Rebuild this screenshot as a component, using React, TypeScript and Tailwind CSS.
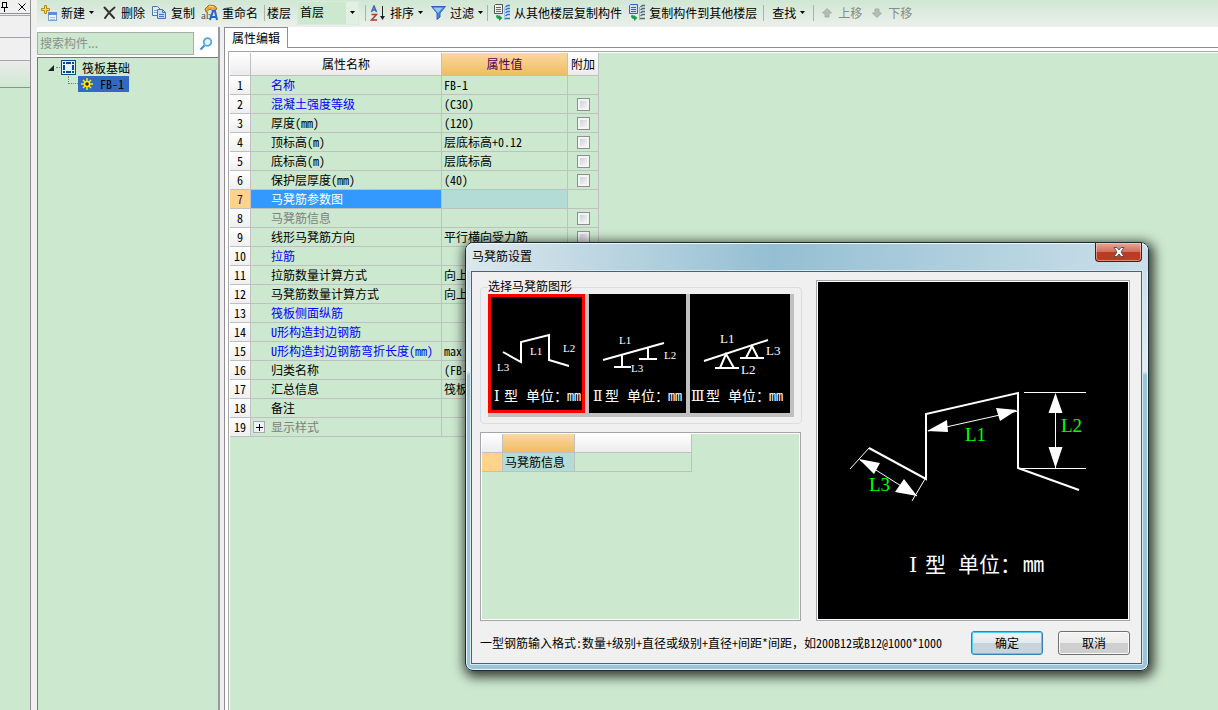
import { useState } from "react";
import type { ReactNode } from "react";

type Row = {
  name: string;
  value?: string;
  kind?: "link" | "muted";
  check?: boolean;
  expand?: boolean;
};

const rows: Row[] = [
  { name: "名称", value: "FB-1", kind: "link" },
  { name: "混凝土强度等级", value: "(C30)", kind: "link", check: true },
  { name: "厚度(mm)", value: "(120)", check: true },
  { name: "顶标高(m)", value: "层底标高+0.12", check: true },
  { name: "底标高(m)", value: "层底标高", check: true },
  { name: "保护层厚度(mm)", value: "(40)", check: true },
  { name: "马凳筋参数图" },
  { name: "马凳筋信息", kind: "muted", check: true },
  { name: "线形马凳筋方向", value: "平行横向受力筋", check: true },
  { name: "拉筋", kind: "link", check: true },
  { name: "拉筋数量计算方式", value: "向上", check: true },
  { name: "马凳筋数量计算方式", value: "向上", check: true },
  { name: "筏板侧面纵筋", kind: "link", check: true },
  { name: "U形构造封边钢筋", kind: "link", check: true },
  { name: "U形构造封边钢筋弯折长度(mm)", value: "max", kind: "link", check: true },
  { name: "归类名称", value: "(FB-1)", check: true },
  { name: "汇总信息", value: "筏板基础", check: true },
  { name: "备注", check: true },
  { name: "显示样式", kind: "muted", expand: true },
];

const SELECTED_ROW = 6;

export default function App() {
  const [shape, setShape] = useState(0);

  return (
    <div className="relative flex min-h-screen overflow-hidden bg-[#f0f0f0] text-xs text-black font-['Noto_Sans_Mono_CJK_SC','Noto_Sans_CJK_SC',sans-serif]">
      <DockStrip />
      <div className="ml-1.5 flex min-w-0 flex-1 flex-col">
        <Toolbar />
        <div className="flex flex-1">
          <ComponentTree />
          <PropertyEditor />
        </div>
      </div>
      <ShapeDialog shape={shape} onShape={setShape} />
    </div>
  );
}

/* ---------- left dock ---------- */
function DockStrip() {
  return (
    <aside className="flex w-[31px] shrink-0 flex-col border-r border-[#8f8f94] bg-[#f0f0f0]">
      <div className="flex h-3.5 items-center justify-between border-b border-[#8f8f94] pr-1">
        <button aria-label="固定">
          <svg width="9" height="11" viewBox="0 0 9 11" stroke="#000" fill="none">
            <path d="M2.5 1v5M6.5 1v5M2 1.5h5M1 6.5h7M4.5 7v4" />
          </svg>
        </button>
        <button aria-label="关闭">
          <svg width="8" height="8" viewBox="0 0 8 8" stroke="#000">
            <path d="M0.5 0.5l7 7M7.5 0.5l-7 7" />
          </svg>
        </button>
      </div>
      <div className="mt-px h-[23px] border-y border-[#a6a6aa]" />
      <div className="h-[23px] border-b border-[#a6a6aa]" />
      <div className="h-[26px] bg-linear-to-b from-[#ebebeb] to-[#cfe8d2]" />
      <div className="flex-1 border-t border-[#8f8f94] bg-[#cce8cf]" />
    </aside>
  );
}

/* ---------- toolbar ---------- */
const uiFont = "font-['Noto_Sans_CJK_SC',sans-serif]";

function Toolbar() {
  return (
    <header className={`flex h-[27px] items-center overflow-hidden bg-linear-to-b from-[#d0e7d3] to-[#ecefec] pb-0.5 pl-1 whitespace-nowrap ${uiFont}`}>
      <ToolButton icon={<NewIcon />} label="新建" menu />
      <div className="w-2" />
      <ToolButton icon={<DeleteIcon />} label="删除" />
      <div className="w-1.5" />
      <ToolButton icon={<CopyIcon />} label="复制" />
      <div className="w-1.5" />
      <ToolButton icon={<RenameIcon />} label="重命名" />
      <Separator className="ml-1.5 mr-0.5" />
      <label htmlFor="floor">楼层</label>
      <div className="relative ml-1.5 h-6 w-[62px] border border-[#d8ecda] bg-[#cce8cf]">
        <select id="floor" className="h-full w-full appearance-none pb-0.5 pl-0.5 outline-none">
          <option>首层</option>
        </select>
        <span className="pointer-events-none absolute inset-y-0 right-0 flex w-3 items-center justify-center bg-[#e2efe3]">
          <Caret />
        </span>
      </div>
      <Separator className="mr-1 ml-1.5" />
      <ToolButton icon={<SortIcon />} label="排序" menu />
      <div className="w-2" />
      <ToolButton icon={<FilterIcon />} label="过滤" menu />
      <Separator className="mr-1.5 ml-1" />
      <ToolButton icon={<FloorCopyIcon />} label="从其他楼层复制构件" />
      <div className="w-[7px]" />
      <ToolButton icon={<FloorCopyIcon blue />} label="复制构件到其他楼层" />
      <Separator className="mr-2 ml-1.5" />
      <ToolButton label="查找" menu />
      <Separator className="mr-1.5 ml-2" />
      <ToolButton icon={<MoveIcon />} label="上移" disabled />
      <div className="w-2" />
      <ToolButton icon={<MoveIcon down />} label="下移" disabled />
    </header>
  );
}

function ToolButton({ icon, label, menu, disabled }: { icon?: ReactNode; label: string; menu?: boolean; disabled?: boolean }) {
  return (
    <button disabled={disabled} className="flex shrink-0 items-center gap-1 disabled:text-[#858b86]">
      {icon}
      <span>{label}</span>
      {menu && <Caret />}
    </button>
  );
}

function Caret() {
  return (
    <svg width="5" height="3" viewBox="0 0 5 3">
      <path d="M0 0h5L2.5 3z" fill="#000" />
    </svg>
  );
}

function Separator({ className }: { className: string }) {
  return <span className={`h-4 w-px shrink-0 bg-[#a9b3aa] ${className}`} />;
}

function NewIcon() {
  return (
    <svg width="16" height="16" viewBox="0 0 16 16">
      <path d="M3.5 0.5h2v3h3v2h-3v3h-2v-3h-3v-2h3z" fill="#ffe04a" stroke="#b98a14" />
      <rect x="7.5" y="7.5" width="8" height="8" fill="#eef5ff" stroke="#7ba0d4" />
      <path d="M7 7h9v3H7z" fill="#5d8fd6" />
      <path d="M9 12.5h5M9 14.5h5" stroke="#9fbde6" />
    </svg>
  );
}

function DeleteIcon() {
  return (
    <svg width="15" height="16" viewBox="0 0 15 16" fill="none" stroke="#333" strokeLinecap="round">
      <path d="M2.5 2.5l9.500 10.500" strokeWidth="2" />
      <path d="M12.500 2.500C9 5 5.500 9 3 13" strokeWidth="2" />
    </svg>
  );
}

function CopyIcon() {
  return (
    <svg width="16" height="16" viewBox="0 0 16 16" stroke="#4c74bd">
      <path d="M1.500 1.500h5l3 3v6h-8z" fill="#e3eeff" />
      <path d="M3 5.500h4M3 7.500h4" stroke="#86a9de" />
      <path d="M6.500 4.500h5l3 3v6h-8z" fill="#c3d9fa" />
      <path d="M11.500 4.500v3h3M8 9.500h5M8 11.500h5" fill="none" />
    </svg>
  );
}

function RenameIcon() {
  return (
    <svg width="17" height="17" viewBox="0 0 17 17">
      <path d="M4 5l4-4 6 1 2 3-4 2-3-2-4 3z" fill="#e8a83a" stroke="#a86b19" />
      <path d="M8 2l5 1" stroke="#ffe9a0" />
      <text x="0" y="15" fontSize="11" fill="#555" fontFamily="Liberation Serif, serif">ab</text>
      <path d="M9 16l3-9h2l2 9M10 13h5" stroke="#2866c8" strokeWidth="2" fill="none" />
    </svg>
  );
}

function SortIcon() {
  return (
    <svg width="16" height="16" viewBox="0 0 16 16" fill="none">
      <path d="M1.500 7l2.500-6 2.500 6M2.500 5h3" stroke="#3d63b5" strokeWidth="1.500" />
      <path d="M1.500 9.500h5l-5 5.500h5.500" stroke="#b33a3a" strokeWidth="1.500" />
      <path d="M12.500 1v12" stroke="#222" />
      <path d="M10 11l2.500 4 2.500-4z" fill="#222" />
    </svg>
  );
}

function FilterIcon() {
  return (
    <svg width="15" height="15" viewBox="0 0 15 15">
      <path d="M0.500 1.500h14L9 8v4l-3 2.500V8z" fill="#4485e2" stroke="#2d62bb" />
      <path d="M2.500 2.800h9L7 8" fill="#9cc6fa" />
    </svg>
  );
}

function FloorCopyIcon({ blue }: { blue?: boolean }) {
  return (
    <svg width="16" height="17" viewBox="0 0 16 17" fill="none">
      <path d="M0.500 1.500l1-1h7v9h-8z" fill={blue ? "#cfe0ff" : "#f1f1f1"} stroke={blue ? "#2f5fc0" : "#555"} />
      <path d="M2 3.500h5M2 5.500h5M2 7.500h5" stroke={blue ? "#2f5fc0" : "#666"} />
      <path d="M2 11.500c2-1.500 3 0 3 1.500v-2l3.500 3-3.500 3v-2c-2 0-3-1.500-3-3.500z" fill="#18a048" />
      <path d="M10.500 3v13" stroke={blue ? "#9ab0cc" : "#9cc5f2"} />
      <path d="M16 1.500h-2.500l-2 1.500M16 4.500h-2.500l-2 1.500M16 7.500h-2.500l-2 1.500M16 10.500h-2.500l-2 1.500M16 14.500h-5" stroke={blue ? "#52657f" : "#2f74cc"} strokeWidth="1.500" />
    </svg>
  );
}

function MoveIcon({ down }: { down?: boolean }) {
  return (
    <svg width="14" height="10" viewBox="0 0 14 10" className={down ? "rotate-180" : ""}>
      <path d="M7 0.500l4.500 4.500h-2.500v4h-4v-4h-2.500z" fill="#b4bcb5" stroke="#a4aea5" />
    </svg>
  );
}

/* ---------- component tree ---------- */
function ComponentTree() {
  return (
    <section className="mr-1 flex w-[183px] shrink-0 flex-col border-r-2 border-[#9a9a9e] bg-white">
      <div className="mt-[3px] flex h-[27px] items-center">
        <input
          aria-label="搜索构件"
          placeholder="搜索构件..."
          className={`h-[23px] min-w-0 flex-1 border border-[#a6b0a8] bg-[#cce8cf] px-0.5 pb-0.5 outline-none placeholder:text-[#8a918b] ${uiFont}`}
        />
        <button aria-label="搜索" className="flex w-6 justify-center">
          <svg width="14" height="14" viewBox="0 0 14 14" fill="none">
            <circle cx="8.500" cy="5" r="3.800" stroke="#55a4e4" strokeWidth="1.800" fill="#e8f5ff" />
            <path d="M5.500 8.500L1.500 12.500" stroke="#3f8fd6" strokeWidth="2.200" />
          </svg>
        </button>
      </div>
      <div className="flex-1 border-t border-l border-[#77777c] bg-[#cce8cf] pt-px">
        <ul>
          <li>
            <div className="flex h-[17px] items-center pl-2.5">
              <svg width="6" height="6" viewBox="0 0 6 6">
                <path d="M6 0v6H0z" fill="#222" />
              </svg>
              <span className="ml-0.5 mr-px w-1 border-t border-dotted border-[#808080]" />
              <svg width="15" height="15" viewBox="0 0 15 15" fill="none">
                <rect width="15" height="15" fill="#0b4a8f" />
                <path d="M1 1.500h13M1 13.500h13M1.500 1v13M13.500 1v13M1 4.500h13M1 10.500h13M4.500 1v13M10.500 1v13" stroke="#dff0ff" />
                <rect x="5" y="5" width="5" height="5" fill="#e8f6ff" />
              </svg>
              <span className="ml-1.5">筏板基础</span>
            </div>
            <ul className="pl-[30px]">
              <li className="flex">
                <span className="mb-2 w-2.5 border-b border-l border-dotted border-[#808080]" />
                <div className="flex h-4 items-center bg-[#316ac5] pr-[5px] pl-[3px]">
                  <svg width="12" height="12" viewBox="0 0 12 12" fill="none">
                    <path d="M6 0v12M0 6h12M2 2l8 8M10 2l-8 8" stroke="#ffea00" strokeWidth="1.500" />
                    <circle cx="6" cy="6" r="2.500" fill="#222" stroke="#ffea00" strokeWidth="1.500" />
                  </svg>
                  <span className="ml-[7px]">FB-1</span>
                </div>
              </li>
            </ul>
          </li>
        </ul>
      </div>
    </section>
  );
}

/* ---------- property grid ---------- */
const headCell = "h-[23px] border-r border-b border-[#c0c0c0] bg-linear-to-b from-white to-[#ececec] p-0 text-center font-normal";
const cell = "h-[19px] border-r border-b border-[#c0c0c0] p-0";

function PropertyEditor() {
  return (
    <section className="flex min-w-0 flex-1 flex-col border-l border-[#8f8c96] bg-white">
      <div className="flex h-[21px]" role="tablist">
        <button role="tab" aria-selected className="w-[63px] border-t border-r border-[#8f8c96] bg-white">
          属性编辑
        </button>
        <div className="flex-1 border-b border-[#8f8c96]" />
      </div>
      <div className="mt-[3px] ml-[3px] flex-1 border-t border-l border-[#a6a6aa] bg-white pt-px pl-px">
        <div className="h-full bg-[#cce8cf]">
          <table className="w-[369px] table-fixed border-separate border-spacing-0 leading-4">
            <colgroup>
              <col className="w-[21px]" />
              <col className="w-[191px]" />
              <col className="w-[126px]" />
              <col className="w-[31px]" />
            </colgroup>
            <thead>
              <tr>
                <th className={headCell} />
                <th className={headCell}>属性名称</th>
                <th className="h-[23px] border-r border-b border-[#c0c0c0] bg-linear-to-b from-[#fbd7a0] to-[#efbd60] p-0 text-center font-normal text-[#500050]">属性值</th>
                <th className={headCell}>附加</th>
              </tr>
            </thead>
            <tbody>
              {rows.map((row, i) => (
                <PropertyRow key={row.name} row={row} index={i} selected={i === SELECTED_ROW} />
              ))}
            </tbody>
          </table>
        </div>
      </div>
    </section>
  );
}

function PropertyRow({ row, index, selected }: { row: Row; index: number; selected: boolean }) {
  const color = selected ? "text-white" : row.kind === "link" ? "text-[#0000ff]" : row.kind === "muted" ? "text-[#808080]" : "text-black";

  return (
    <tr>
      <td className={`${cell} text-center ${selected ? "bg-[#ffd48a] text-[#500050]" : "bg-linear-to-b from-white to-[#efefef]"}`}>{index + 1}</td>
      <td className={`${cell} ${selected ? "bg-[#3399ff]" : ""} ${color}`}>
        <div className="flex items-center">
          <span className="flex w-5 shrink-0 pl-0.5">
            {row.expand && (
              <button aria-label="展开" className="flex size-3 items-center justify-center border border-[#a8a8b0] bg-[#eef0f4]">
                <svg width="7" height="7" viewBox="0 0 7 7" stroke="#000">
                  <path d="M0 3.500h7M3.500 0v7" />
                </svg>
              </button>
            )}
          </span>
          <span className="whitespace-nowrap">{row.name}</span>
        </div>
      </td>
      <td className={`${cell} overflow-hidden pl-0.5 whitespace-nowrap ${selected ? "bg-[#b4dcd7]" : ""}`}>{row.value}</td>
      <td className={cell}>
        {row.check && (
          <input
            type="checkbox"
            aria-label={row.name}
            className="mx-auto block size-[13px] appearance-none border border-[#8e8f8f] bg-linear-to-br from-[#c3c8ce] to-white shadow-[inset_0_0_0_2px_#f4f4f4]"
          />
        )}
      </td>
    </tr>
  );
}

/* ---------- shape dialog ---------- */
function ShapeDialog({ shape, onShape }: { shape: number; onShape: (i: number) => void }) {
  return (
    <div
      role="dialog"
      aria-label="马凳筋设置"
      className="absolute top-[242px] left-[465px] flex w-[684px] flex-col rounded-lg border border-[#1d2a30] bg-linear-to-b from-[#c4dbe6] from-0% via-[#e3edf2] via-30% to-[#9cc4d8] to-31% pr-1.5 pb-1.5 pl-[5px] shadow-[2px_3px_12px_3px_rgba(0,0,0,0.75),inset_0_0_0_1px_#e8f4f9]"
    >
      <div className="-mr-1.5 -ml-[5px] flex h-7 items-start justify-between rounded-t-lg bg-linear-to-r from-[#dce8ee] via-[#94bfd2] via-45% to-[#cadfe9] pr-1.5 pl-1.5 shadow-[inset_0_1px_0_#eef7fb]">
        <h1 className={`leading-[26px] ${uiFont}`}>马凳筋设置</h1>
        <button
          aria-label="关闭"
          className="flex h-[19px] w-[47px] items-center justify-center rounded-b border border-t-0 border-[#4c1a16] bg-linear-to-b from-[#e6a89c] from-0% via-[#d0705f] via-48% to-[#bd3a24] to-52% shadow-[inset_0_0_0_1px_rgba(255,220,210,0.5)]"
        >
          <svg width="12" height="10" viewBox="0 0 12 10">
            <path d="M1 0.500h3l2 2.500 2-2.500h3L8 5l3 4.500H8L6 7 4 9.500H1L4 5z" fill="#fff" stroke="#53565c" />
          </svg>
        </button>
      </div>

      <div className="border border-[#4d626d] bg-[#f0f0f0] pt-2 pr-[11px] pb-2 pl-2 shadow-[0_0_0_1px_#d6e8f0]">
        <div className="flex gap-[15px]">
          <div className="flex w-[321px] shrink-0 flex-col">
            <fieldset className="h-[144px] rounded border border-[#d5dfe5] px-[7px]">
              <legend className="h-[14px] leading-3">选择马凳筋图形</legend>
              <div className="grid w-[306px] grid-cols-[97px_97px_100px] gap-1 bg-[#c0c0c0] pr-1 pb-1">
                {thumbs.map((Thumb, i) => (
                  <button
                    key={i}
                    aria-pressed={shape === i}
                    onClick={() => onShape(i)}
                    className={`h-[119px] overflow-hidden bg-black ${shape === i ? "ring-3 ring-[#ff0000] ring-inset" : ""}`}
                  >
                    <Thumb />
                  </button>
                ))}
              </div>
            </fieldset>
            <div className="mt-2 flex-1 border border-[#a6a6aa] bg-white p-px">
              <div className="h-full bg-[#cce8cf]">
                <table className="w-[210px] table-fixed border-separate border-spacing-0 leading-4">
                  <colgroup>
                    <col className="w-[21px]" />
                    <col className="w-[72px]" />
                    <col className="w-[117px]" />
                  </colgroup>
                  <tbody>
                    <tr>
                      <td className="h-[19px] border-r border-b border-[#c0c0c0] bg-linear-to-b from-white to-[#ececec] p-0" />
                      <td className="border-r border-b border-[#c0c0c0] bg-linear-to-b from-[#fbd7a0] to-[#efbd60] p-0" />
                      <td className="border-r border-b border-[#c0c0c0] bg-linear-to-b from-white to-[#ececec] p-0" />
                    </tr>
                    <tr>
                      <td className={`${cell} bg-[#ffd48a]`} />
                      <td className={`${cell} bg-[#b4dcd7] pl-0.5 whitespace-nowrap`}>马凳筋信息</td>
                      <td className={cell} />
                    </tr>
                  </tbody>
                </table>
              </div>
            </div>
          </div>
          <div className="flex-1 border border-[#a6a6aa] bg-white p-px">
            <Preview />
          </div>
        </div>

        <div className="mt-[10px] flex items-center">
          <p className="flex-1 whitespace-nowrap">一型钢筋输入格式:数量+级别+直径或级别+直径+间距*间距，如200B12或B12@1000*1000</p>
          <button className="h-6 w-[72px] rounded-[3px] border border-[#3c7fb1] bg-linear-to-b from-[#eef3f6] via-[#e3eaee] via-48% to-[#c8d4da] to-52% shadow-[inset_0_0_0_1px_#46d0f5]">确定</button>
          <button className="ml-[15px] h-6 w-[72px] rounded-[3px] border border-[#707070] bg-linear-to-b from-[#f2f2f2] via-[#ebebeb] via-48% to-[#cfcfcf] to-52% shadow-[inset_0_0_0_1px_#fbfbfb]">取消</button>
        </div>
      </div>
    </div>
  );
}

const serif = "'Liberation Serif', serif";
const roman = "'DejaVu Serif', serif";

function Caption({ numeral, x }: { numeral: string; x: number }) {
  return (
    <g fill="#fff" stroke="none" fontSize="14">
      <text x={x} y="107" fontFamily={roman}>{numeral}</text>
      <text x="16" y="107">型</text>
      <text x="38" y="107">单位：</text>
      <text x="79" y="107">mm</text>
    </g>
  );
}

function ThumbOne() {
  return (
    <svg width="97" height="119" viewBox="0 0 97 119" fill="none" stroke="#fff" strokeWidth="2">
      <path d="M15 58l18 10V48l28-7v25l20 6" />
      <g fill="#fff" stroke="none" fontSize="11" fontFamily={serif}>
        <text x="42" y="61">L1</text>
        <text x="75" y="58">L2</text>
        <text x="9" y="77">L3</text>
      </g>
      <Caption numeral="Ⅰ" x={6} />
    </svg>
  );
}

function ThumbTwo() {
  return (
    <svg width="97" height="119" viewBox="0 0 97 119" fill="none" stroke="#fff" strokeWidth="2">
      <path d="M14 66l61-17M33 61v12M25 73h17M59 54v11M50 65h18" />
      <g fill="#fff" stroke="none" fontSize="11" fontFamily={serif}>
        <text x="30" y="50">L1</text>
        <text x="75" y="65">L2</text>
        <text x="42" y="78">L3</text>
      </g>
      <Caption numeral="Ⅱ" x={4} />
    </svg>
  );
}

function ThumbThree() {
  return (
    <svg width="100" height="119" viewBox="0 0 100 119" fill="none" stroke="#fff" strokeWidth="2">
      <path d="M14 67l64-21M25 74h24M50 64h24" />
      <path d="M30 74l6-14 8 14M56 64l6-12 6 12" />
      <g fill="#fff" stroke="none" fontSize="13" fontFamily={serif}>
        <text x="30" y="49">L1</text>
        <text x="51" y="80">L2</text>
        <text x="76" y="61">L3</text>
      </g>
      <Caption numeral="Ⅲ" x={1} />
    </svg>
  );
}

const thumbs = [ThumbOne, ThumbTwo, ThumbThree];

function Preview() {
  return (
    <svg viewBox="0 0 310 337" className="block w-full bg-black" fill="none" stroke="#fff">
      <path d="M51 166l57 31v-65l92-21v75l61 22" strokeWidth="2" />
      <path d="M51 166l-19 21M107 197l-13 22M206 110.500h62M201 186.500h67" />
      <path d="M42 178l57 36M110 149l90-20M237.500 112v74" />
      <g fill="#fff" stroke="none">
        <path d="M41 177l21 4-6 11zM99 214l-22-4 9-13z" />
        <path d="M109 149l20-11 1 12zM199 128l-21-2 4 13z" />
        <path d="M237.500 111l7 20h-14zM237.500 186l7-21h-14z" />
      </g>
      <g fill="#00ff00" stroke="none" fontSize="19" fontFamily={serif}>
        <text x="147" y="159">L1</text>
        <text x="243" y="150">L2</text>
        <text x="51" y="209">L3</text>
      </g>
      <g fill="#fff" stroke="none" fontSize="21">
        <text x="91" y="290" fontFamily={roman}>Ⅰ</text>
        <text x="107" y="290">型</text>
        <text x="140" y="290">单位：</text>
        <text x="205" y="290">mm</text>
      </g>
    </svg>
  );
}
